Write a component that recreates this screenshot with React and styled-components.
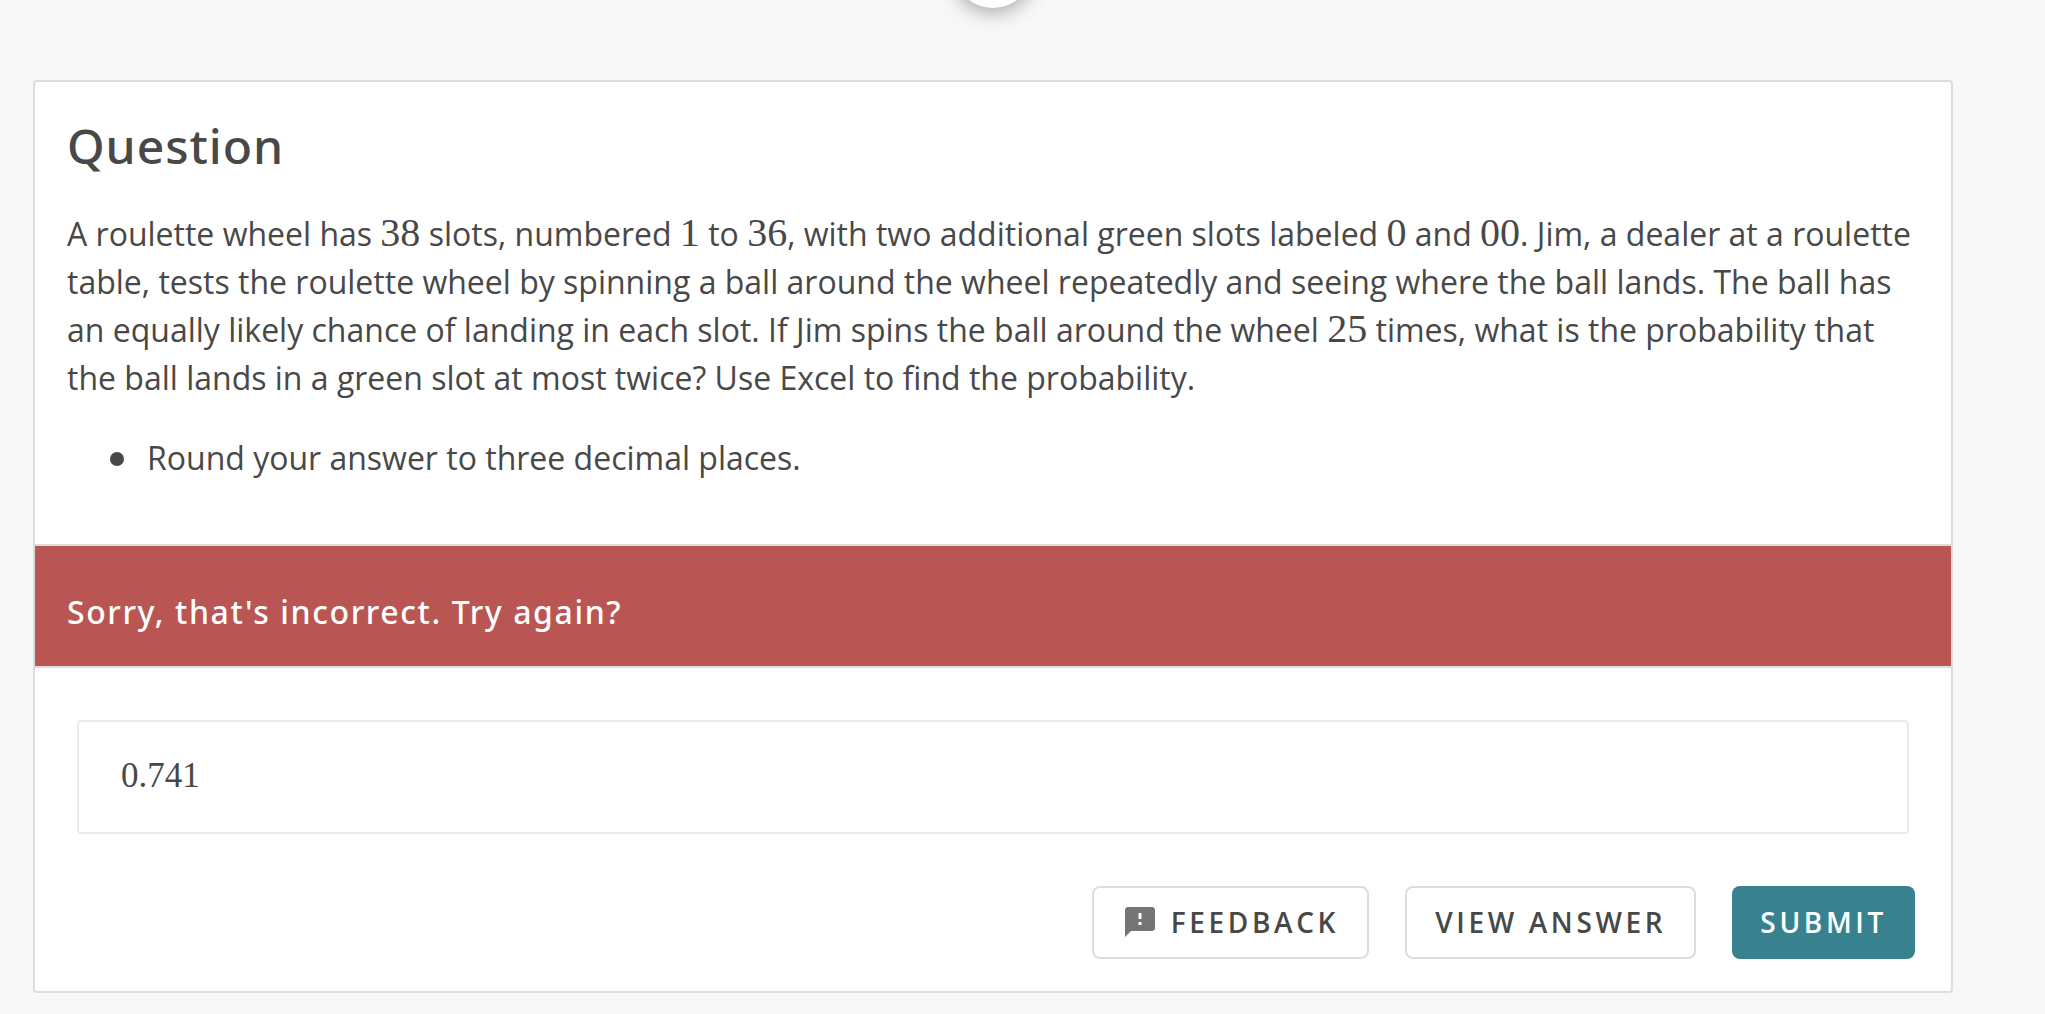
import React, { useState } from "react";
import styled, { createGlobalStyle, css } from "styled-components";

const color = {
  page: "#f8f8f8",
  card: "#ffffff",
  line: "#dddddd",
  field: "#eaeaea",
  text: "#484848",
  error: "#b95552",
  accent: "#388290",
  icon: "#757575",
};

const GlobalStyle = createGlobalStyle`
  *, *::before, *::after { box-sizing: border-box; }
  body {
    margin: 0;
    background: ${color.page};
    color: ${color.text};
    font-family: "Open Sans", "Noto Sans", sans-serif;
    font-size: 32px;
    line-height: 48px;
  }
`;

const Page = styled.main`
  padding: 0 92px 20px 33px;
`;

const StepTrack = styled.div`
  display: flex;
  justify-content: center;
  align-items: flex-end;
  height: 80px;
  padding-bottom: 72px;
`;

const StepDot = styled.div`
  flex: none;
  width: 80px;
  height: 80px;
  border-radius: 50%;
  background: ${color.card};
  box-shadow: 0 4px 20px rgba(0, 0, 0, 0.35);
`;

const Card = styled.section`
  position: relative;
  background: ${color.card};
  border: 2px solid ${color.line};
  border-radius: 4px;
`;

const Prompt = styled.div`
  padding: 32px 32px 62px;
`;

const Title = styled.h1`
  margin: 0 0 32px;
  font-family: "Noto Sans", sans-serif;
  font-size: 48px;
  line-height: 64px;
  font-weight: 500;
  letter-spacing: 0.02em;
`;

const Paragraph = styled.p`
  margin: 0 0 32px;
`;

const Num = styled.span`
  font-family: "Liberation Serif", serif;
  font-size: 40px;
  line-height: 40px;
`;

const Notes = styled.ul`
  margin: 0;
  padding: 0 0 0 43px;
  list-style: none;
`;

const Note = styled.li`
  display: flex;
  align-items: center;
  gap: 23px;

  &::before {
    content: "";
    flex: none;
    width: 14px;
    height: 14px;
    margin-top: 2px;
    border-radius: 50%;
    background: ${color.text};
  }
`;

const Alert = styled.div`
  padding: 42px 32px 30px;
  background: ${color.error};
  border-top: 2px solid ${color.line};
  border-bottom: 2px solid ${color.line};
  color: #ffffff;
  font-family: "Noto Sans", sans-serif;
  font-weight: 500;
  letter-spacing: 0.05em;
`;

const AnswerForm = styled.form`
  display: flex;
  flex-direction: column;
  gap: 52px;
  padding: 52px 36px 32px 42px;
`;

const AnswerField = styled.input`
  height: 114px;
  margin-right: 6px;
  padding: 0 42px 2px;
  border: 2px solid ${color.field};
  border-radius: 4px;
  background: ${color.card};
  color: ${color.text};
  font-family: "Liberation Serif", serif;
  font-size: 35px;
  outline: none;
`;

const Actions = styled.div`
  display: flex;
  justify-content: flex-end;
  gap: 36px;
`;

const Button = styled.button`
  display: flex;
  align-items: center;
  gap: 13px;
  height: 73px;
  padding: 0 28px 2px;
  border: 2px solid ${color.line};
  border-radius: 8px;
  background: ${color.card};
  color: ${color.text};
  font-family: inherit;
  font-size: 28px;
  line-height: 40px;
  font-weight: 600;
  letter-spacing: 0.13em;
  text-transform: uppercase;
  cursor: pointer;

  ${({ $primary }) =>
    $primary &&
    css`
      border: 0;
      background: ${color.accent};
      color: #ffffff;
    `}
`;

const Icon = styled.svg`
  width: 36px;
  height: 36px;
  fill: ${color.icon};
`;

function FeedbackIcon() {
  return (
    <Icon viewBox="0 0 24 24" aria-hidden="true">
      <path d="M20 2H4c-1.1 0-1.99.9-1.99 2L2 22l4-4h14c1.1 0 2-.9 2-2V4c0-1.1-.9-2-2-2zm-7 12h-2v-2h2v2zm0-4h-2V6h2v4z" />
    </Icon>
  );
}

export default function App() {
  const [answer, setAnswer] = useState("0.741");

  return (
    <>
      <GlobalStyle />
      <Page>
        <StepTrack>
          <StepDot />
        </StepTrack>
        <Card>
          <Prompt>
            <Title id="question">Question</Title>
            <Paragraph>
              A roulette wheel has <Num>38</Num> slots, numbered <Num>1</Num> to{" "}
              <Num>36</Num>, with two additional green slots labeled{" "}
              <Num>0</Num> and <Num>00</Num>. Jim, a dealer at a roulette table,
              tests the roulette wheel by spinning a ball around the wheel
              repeatedly and seeing where the ball lands. The ball has an
              equally likely chance of landing in each slot. If Jim spins the
              ball around the wheel <Num>25</Num> times, what is the probability
              that the ball lands in a green slot at most twice? Use Excel to
              find the probability.
            </Paragraph>
            <Notes>
              <Note>Round your answer to three decimal places.</Note>
            </Notes>
          </Prompt>
          <Alert role="alert">Sorry, that's incorrect. Try again?</Alert>
          <AnswerForm onSubmit={(event) => event.preventDefault()}>
            <AnswerField
              type="text"
              aria-labelledby="question"
              value={answer}
              onChange={(event) => setAnswer(event.target.value)}
            />
            <Actions>
              <Button type="button">
                <FeedbackIcon />
                Feedback
              </Button>
              <Button type="button">View answer</Button>
              <Button type="submit" $primary>
                Submit
              </Button>
            </Actions>
          </AnswerForm>
        </Card>
      </Page>
    </>
  );
}
